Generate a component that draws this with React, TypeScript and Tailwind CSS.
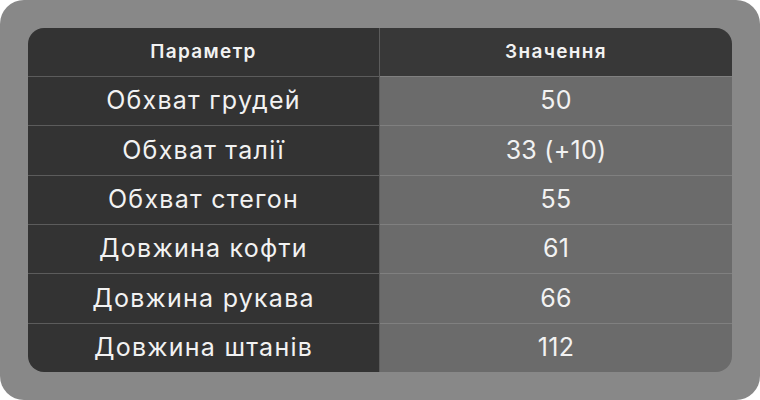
const rows = [
  ['Обхват грудей', '50'],
  ['Обхват талії', '33 (+10)'],
  ['Обхват стегон', '55'],
  ['Довжина кофти', '61'],
  ['Довжина рукава', '66'],
  ['Довжина штанів', '112'],
]

export default function App() {
  return (
    <div
      className="w-[760px] h-[400px] bg-white"
      style={{ fontFamily: 'Inter, "Open Sans", sans-serif' }}
    >
      <div className="w-full h-full rounded-3xl bg-[#888888] p-7">
        <div className="h-full rounded-2xl overflow-hidden flex flex-col text-[#f2f2f2]">
          {/* Header */}
          <div className="grid grid-cols-2 h-12 shrink-0">
            <div className="bg-[#333333] flex items-center justify-center text-[19px] font-semibold tracking-[0.07em] border-r border-[#5c5c5c]">
              Параметр
            </div>
            <div className="bg-[#383838] flex items-center justify-center text-[19px] font-semibold tracking-[0.07em]">
              Значення
            </div>
          </div>
          {rows.map(([name, value]) => (
            <div key={name} className="grid grid-cols-2 flex-1">
              <div className="bg-[#333333] flex items-center justify-center text-[25px] tracking-[0.05em] border-t border-r border-[#5c5c5c]">
                {name}
              </div>
              <div className="bg-[#6b6b6b] flex items-center justify-center text-[25px] tracking-[0.01em] border-t border-[#808080]">
                {value}
              </div>
            </div>
          ))}
        </div>
      </div>
    </div>
  )
}
